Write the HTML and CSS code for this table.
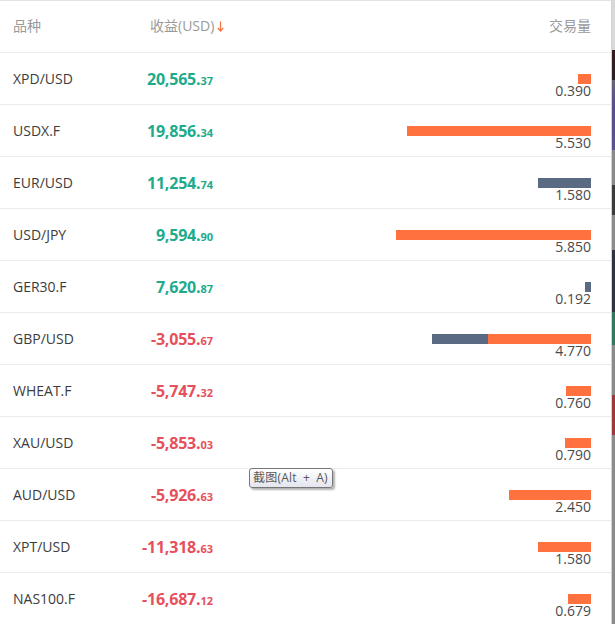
FILE: index.html
```html
<!DOCTYPE html>
<html lang="zh">
<head>
<meta charset="utf-8">
<title>收益排行</title>
<link rel="stylesheet" href="styles.css">
</head>
<body>
<div class="screen">
  <div class="panel">
    <div class="row head">
      <div class="c-sym">品种</div>
      <div class="c-pl-head"><span class="ht">收益(USD)</span><svg class="arrow" width="7" height="11" viewBox="0 0 7 11"><path d="M3.5 0.5 V10 M0.8 7 L3.5 10 L6.2 7" fill="none" stroke="#f3703e" stroke-width="1.2"/></svg></div>
      <div class="c-vol-head">交易量</div>
    </div>

    <div class="row">
      <div class="c-sym">XPD/USD</div>
      <div class="c-pl up"><span class="int">20,565.</span><span class="dec">37</span></div>
      <div class="c-vol"><div class="bar"><span class="seg o" style="width:13px"></span></div><div class="num">0.390</div></div>
    </div>
    <div class="row">
      <div class="c-sym">USDX.F</div>
      <div class="c-pl up"><span class="int">19,856.</span><span class="dec">34</span></div>
      <div class="c-vol"><div class="bar"><span class="seg o" style="width:184px"></span></div><div class="num">5.530</div></div>
    </div>
    <div class="row">
      <div class="c-sym">EUR/USD</div>
      <div class="c-pl up"><span class="int">11,254.</span><span class="dec">74</span></div>
      <div class="c-vol"><div class="bar"><span class="seg g" style="width:53px"></span></div><div class="num">1.580</div></div>
    </div>
    <div class="row">
      <div class="c-sym">USD/JPY</div>
      <div class="c-pl up"><span class="int">9,594.</span><span class="dec">90</span></div>
      <div class="c-vol"><div class="bar"><span class="seg o" style="width:195px"></span></div><div class="num">5.850</div></div>
    </div>
    <div class="row">
      <div class="c-sym">GER30.F</div>
      <div class="c-pl up"><span class="int">7,620.</span><span class="dec">87</span></div>
      <div class="c-vol"><div class="bar"><span class="seg g" style="width:6px"></span></div><div class="num">0.192</div></div>
    </div>
    <div class="row">
      <div class="c-sym">GBP/USD</div>
      <div class="c-pl down"><span class="int">-3,055.</span><span class="dec">67</span></div>
      <div class="c-vol"><div class="bar"><span class="seg g" style="width:56px"></span><span class="seg o" style="width:103px"></span></div><div class="num">4.770</div></div>
    </div>
    <div class="row">
      <div class="c-sym">WHEAT.F</div>
      <div class="c-pl down"><span class="int">-5,747.</span><span class="dec">32</span></div>
      <div class="c-vol"><div class="bar"><span class="seg o" style="width:25px"></span></div><div class="num">0.760</div></div>
    </div>
    <div class="row">
      <div class="c-sym">XAU/USD</div>
      <div class="c-pl down"><span class="int">-5,853.</span><span class="dec">03</span></div>
      <div class="c-vol"><div class="bar"><span class="seg o" style="width:26px"></span></div><div class="num">0.790</div></div>
    </div>
    <div class="row">
      <div class="c-sym">AUD/USD</div>
      <div class="c-pl down"><span class="int">-5,926.</span><span class="dec">63</span></div>
      <div class="c-vol"><div class="bar"><span class="seg o" style="width:82px"></span></div><div class="num">2.450</div></div>
    </div>
    <div class="row">
      <div class="c-sym">XPT/USD</div>
      <div class="c-pl down"><span class="int">-11,318.</span><span class="dec">63</span></div>
      <div class="c-vol"><div class="bar"><span class="seg o" style="width:53px"></span></div><div class="num">1.580</div></div>
    </div>
    <div class="row">
      <div class="c-sym">NAS100.F</div>
      <div class="c-pl down"><span class="int">-16,687.</span><span class="dec">12</span></div>
      <div class="c-vol"><div class="bar"><span class="seg o" style="width:23px"></span></div><div class="num">0.679</div></div>
    </div>

    <div class="tooltip">截图(Alt + A)</div>
  </div>
  <div class="edge"></div>
</div>
</body>
</html>
```

FILE: styles.css
```css
* { box-sizing: border-box; }
html, body {
  margin: 0;
  padding: 0;
  background: #fff;
}
body {
  font-family: "Open Sans", "Noto Sans CJK SC", sans-serif;
  color: #333;
  overflow: hidden;
}
.screen {
  display: flex;
  width: 615px;
  height: 624px;
  overflow: hidden;
}
.panel {
  position: relative;
  width: 612px;
  height: 624px;
  border-top: 1px solid #e4e4e4;
  border-right: 1px solid #d4d4d4;
  background: #fff;
}
.edge {
  flex: 1;
  background: linear-gradient(to bottom,
    #d9d9d9 0, #d9d9d9 50px,
    #3a1a20 50px, #2a2028 80px,
    #6a6478 80px, #5a4e8e 105px, #5c5290 150px,
    #8a8a8a 150px, #8a8a8a 185px,
    #3c3c3c 185px, #3c3c3c 215px,
    #8c8c8c 215px, #8c8c8c 250px,
    #2e3440 250px, #2e3440 312px,
    #2f7a5c 312px, #2f7a5c 345px,
    #8a8a8a 345px, #8a8a8a 395px,
    #9a3a3a 395px, #9a3a3a 435px,
    #8c8c8c 435px, #8c8c8c 624px);
}
.row {
  display: grid;
  grid-template-columns: 124px 76px 1fr;
  align-items: stretch;
  height: 52px;
  padding: 0 20px 0 13px;
  border-bottom: 1px solid #ebebeb;
}
.row.head {
  height: 52px;
  padding-bottom: 3px;
  color: #9a9a9a;
  font-size: 14px;
}
.head > div {
  display: flex;
  align-items: center;
}
.row.head .c-sym {
  color: #9a9a9a;
}
.c-pl-head {
  padding-left: 13px;
  white-space: nowrap;
  overflow: visible;
}
.ht {
  flex: none;
}
.arrow {
  display: block;
  flex: none;
  margin-left: 3px;
  margin-top: 3px;
}
.c-vol-head {
  justify-content: flex-end;
}
.c-sym {
  display: flex;
  align-items: center;
  font-size: 14px;
  color: #3c3c3c;
}
.c-pl {
  display: flex;
  align-items: center;
  justify-content: flex-end;
  font-weight: 700;
  white-space: nowrap;
}
.c-pl .int {
  font-size: 16px;
  letter-spacing: -0.2px;
}
.c-pl .dec {
  font-size: 11px;
  margin-top: 4px;
}
.up { color: #1dab8c; }
.down { color: #e6505c; }
.c-vol {
  display: flex;
  flex-direction: column;
  align-items: flex-end;
  padding-top: 21px;
}
.bar {
  display: flex;
  height: 10px;
}
.seg { display: block; height: 10px; }
.seg.o { background: #ff7240; }
.seg.g { background: #5a6a82; }
.num {
  font-size: 14px;
  line-height: 14px;
  color: #4a4a4a;
}
.tooltip {
  position: absolute;
  left: 249px;
  top: 467px;
  width: 84px;
  height: 20px;
  padding: 0 3px;
  border: 1px solid #767676;
  border-radius: 3px;
  background: linear-gradient(#ffffff, #e4e5ee);
  box-shadow: 2px 2px 2px rgba(0, 0, 0, 0.3);
  font-family: "Open Sans", "Noto Sans CJK SC", sans-serif;
  font-size: 12px;
  line-height: 18px;
  letter-spacing: 0.2px;
  word-spacing: 3px;
  color: #575757;
  white-space: nowrap;
}
```
